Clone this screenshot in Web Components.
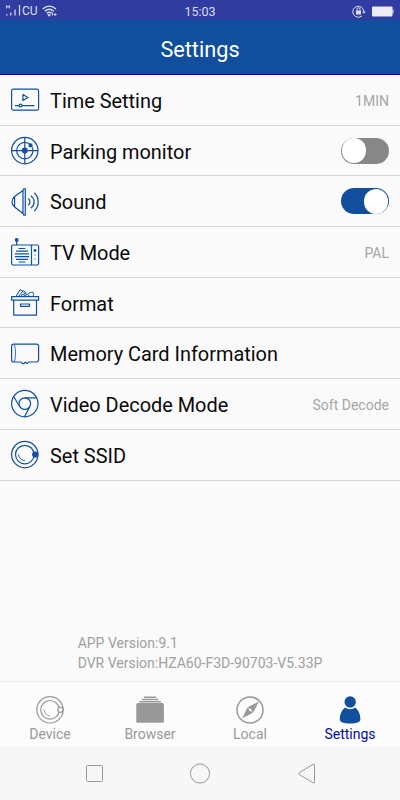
<!DOCTYPE html>
<html lang="en">
<head>
<meta charset="utf-8">
<title>Settings</title>
<style>
html, body {
    margin: 0;
    height: 100%;
}

body {
    font-family: Roboto, "Liberation Sans", sans-serif;
    background: #fafafa;
    overflow: hidden;
}
</style>
</head>
<body>
<settings-app></settings-app>

<script>
const ICONS = {
    time: `<rect x=".6" y="3.2" width="27" height="21" rx="1.8"/><path d="M11.9 8.6v6l5-3zM4 19.600h4.200M10.800 19.600H23.500"/><circle cx="9.500" cy="19.600" r="1.400"/>`,
    parking: `<circle cx="13.800" cy="13.600" r="13.200"/><circle cx="13.800" cy="13.600" r="8.200"/><path d="M13.800.4v26.400M.6 13.600H27"/><circle class="fill" cx="13.800" cy="13.600" r="2.400"/><circle class="fill" cx="19.500" cy="8.300" r="1.500"/>`,
    sound: `<path d="M12 2.500 3.600 8.500C.1 11 .1 16.500 3.600 19L12 25.500M3.600 8.500V19M12 2.500 12.800.8h1.500v26.400h-1.500L12 25.500z"/><path d="M17.200 10.500c2.300 1.800 2.300 5 0 6.800M19.800 7.600c4.400 3.400 4.400 9.200 0 12.600M23.300 4.800c5.200 4.900 5.200 13.300 0 18.200"/>`,
    tv: `<circle class="fill" cx="5.700" cy="1.900" r="1.300"/><path d="M5.700 2v5M3 27v.6M25 27v.6"/><rect x=".6" y="7" width="27" height="20" rx="1.500"/><path d="M20.500 7v20"/><path d="M7.600 10.500h6.800M5 13.200h12M3.900 15.900h14.200M3.900 18.600h14.200M5 21.300h12M7.600 24h6.800"/><circle class="fill" cx="24" cy="12.500" r=".8"/><path d="M23.500 17h1M23.500 21h1"/>`,
    format: `<path d="M.6 7.700h27v3.400H.6zM2.700 11.100h22.800v15H2.700zM9.500 15h9v2.300h-9z"/><path d="M5 7.500 9 .7l3 1.500M7.300 7.500l4.900-5.700 2.500 1.500-1.400 2.200M9.700 7.500l1.600-2.200 5 2.200M12.500 4l4 1.500c1.500-1.600 3.500-2.500 5.500-2.200.7 1 .7 2.700 0 4.200M17 5.700l1.500 1.800" stroke-width="1"/>`,
    card: `<path d="M2.600 4.100H25.400q2.200 0 2.200 2V19.800q0 2-2.200 2.200H18.300q-1 0-1.500 1-.5.800-1.500.2l-1-1-1.300 1.300q-1 .5-1.900-.3-.5-1-1.500-1.200H2.600q-2 0-2-2V6.100q0-2 2-2z"/><path d="M3.400 4.300C5 8.800 4.800 17.500 3.400 22" stroke-width=".8"/>`,
    chrome: `<circle cx="13.800" cy="13.600" r="13.200"/><circle cx="13.800" cy="13.600" r="5.800"/><path d="M13.500 7.800H25.500M2.800 6.800l6.200 10.200M18.800 16.600 13.500 26.700"/>`,
    ssid: `<circle cx="13.800" cy="13.600" r="13.200"/><circle cx="13.800" cy="13.600" r="9.300"/><circle class="fill" cx="24.200" cy="13.600" r="2.500"/><path d="M7.500 13.300c.2 3.300 2.700 6 6.500 6.500" stroke-width=".9"/>`,
    device: `<circle cx="14" cy="13.800" r="13.200"/><circle cx="14" cy="13.800" r="9.300"/><circle class="hole" cx="24.400" cy="13.800" r="2.600"/><path d="M8.200 13.500c.2 3.300 2.400 6 6 6.500" stroke-width=".9"/>`,
    browser: `<rect class="solid" x=".3" y="7" width="27.600" height="19.700" rx="1.500"/><path d="M3.300 5.700h21.600M5.800 3.500h16.600M8 1.300h12.200" stroke-width="1.500"/>`,
    local: `<circle cx="14" cy="14" r="13" stroke-width="1.500"/><path class="solid" d="M22.800 5.600 17.200 16.800 6.200 22.200 11.500 11.200z"/><path d="m11.300 11 6.100 6.100" stroke="#fcfcfc" stroke-width=".8"/><circle cx="14.300" cy="14" r="1.200" fill="#fcfcfc" stroke="none"/>`,
    user: `<circle class="solid" cx="14.200" cy="6" r="5.700"/><path class="solid" d="M9.200 11.400c3 2.300 7 2.300 10 0 3.300 2.300 5.200 6.900 5.200 12.200-.1 2.600-4 4-10.300 4S4 26.200 3.800 23.600c0-5.300 2-9.900 5.400-12.200z"/>`
};

class LineIcon extends HTMLElement {
    constructor() {
        super();
        this.attachShadow({ mode: "open" });
    }

    connectedCallback() {
        this.shadowRoot.innerHTML = `
<style>
:host {
    display: block;
    flex: none;
    width: 28px;
    height: 28px;
}

svg {
    display: block;
    overflow: visible;
    fill: none;
    stroke: currentColor;
    stroke-width: 1.2;
    stroke-linejoin: round;
}

.fill {
    fill: currentColor;
}

.solid {
    fill: currentColor;
    stroke: none;
}

.hole {
    fill: #fcfcfc;
}
</style>
<svg width="28" height="28" viewBox="0 0 28 28">${ICONS[this.getAttribute("name")]}</svg>
`;
    }
}

class StatusBar extends HTMLElement {
    constructor() {
        super();
        this.attachShadow({ mode: "open" }).innerHTML = `
<style>
:host {
    display: grid;
    grid-template-columns: 1fr auto 1fr;
    align-items: center;
    height: 20px;
    padding: 0 6px;
    background: #303c9f;
    color: #dcdff2;
    font-size: 12.5px;
    line-height: 21px;
}

div {
    display: flex;
    align-items: center;
}

.right {
    justify-content: flex-end;
    gap: 6px;
}

.wifi {
    margin-left: 4px;
}

.carrier {
    margin-left: 1px;
    padding-top: 1px;
    font-size: 12px;
}

svg {
    display: block;
    fill: none;
    stroke: currentColor;
}
</style>
<div>
    <svg width="15" height="12" viewBox="0 0 15 12"><path d="M.7 0v3.500M3.300 0v3.500M.7 1.800h2.600" stroke-width=".9"/><path d="M.8 9v1.500M4.800 7.500v3M9 4.500v6M13.500 0v10.500" stroke-width="1.200"/></svg>
    <span class="carrier">CU</span>
    <svg class="wifi" width="16" height="12" viewBox="0 0 16 12"><path d="M.7 4c4-3.800 9.200-3.800 13.200 0M2.800 6.200c2.900-2.500 6.100-2.500 9 0M4.800 8.300c1.700-1.400 3.300-1.400 5 0" stroke-width="1.300"/><path d="m5.800 9.500 1.500 1.800 1.200-1.500zM10.500 7.500v3M13 8v3M11.700 9.500h3" fill="currentColor" stroke-width=".9"/></svg>
</div>
<span>15:03</span>
<div class="right">
    <svg width="14" height="13" viewBox="0 0 14 13"><path d="M10 10.800A5.500 5.500 0 1 1 11.800 6.500" /><path d="M10 6.500h3.800l-1.900 2.300z" fill="currentColor" stroke="none"/><rect x="4" y="5.500" width="5" height="4" fill="currentColor" stroke="none"/><path d="M5 5.500V4.200a1.500 1.500 0 0 1 3 0v1.300"/></svg>
    <svg width="22" height="11" viewBox="0 0 22 11"><rect x="0" y=".5" width="20.500" height="10" rx="1" fill="#ebecf8" stroke="none"/><path d="M21 3.500v4" stroke="#ebecf8"/></svg>
</div>
`;
    }
}

class TitleBar extends HTMLElement {
    constructor() {
        super();
        this.attachShadow({ mode: "open" }).innerHTML = `
<style>
:host {
    display: flex;
    align-items: center;
    justify-content: center;
    box-sizing: border-box;
    height: 55px;
    padding-top: 4px;
    border-bottom: 1px solid #00008f;
    background: #114f9e;
    color: #fff;
    font-size: 21.7px;
}
</style>
<slot></slot>
`;
    }
}

class ToggleSwitch extends HTMLElement {
    constructor() {
        super();
        this.attachShadow({ mode: "open" }).innerHTML = `
<style>
:host {
    display: flex;
    box-sizing: border-box;
    width: 48px;
    height: 26px;
    padding: .7px;
    border-radius: 13px;
    background: #878787;
}

:host([on]) {
    justify-content: flex-end;
    background: #114f9e;
}

span {
    width: 24.6px;
    height: 24.6px;
    border-radius: 50%;
    background: #fff;
}
</style>
<span></span>
`;
    }
}

class SettingRow extends HTMLElement {
    constructor() {
        super();
        this.attachShadow({ mode: "open" });
    }

    connectedCallback() {
        this.shadowRoot.innerHTML = `
<style>
:host {
    display: flex;
    align-items: center;
    box-sizing: border-box;
    height: 50.7px;
    padding: 0 11px;
    border-bottom: 1px solid #d6d6d6;
    color: #0a0a0a;
    font-size: 19.92px;
}

line-icon {
    margin-right: 11px;
    padding-top: 1px;
    color: #114fa5;
}

.label {
    flex: 1;
    padding-top: 3.4px;
    white-space: nowrap;
}

.value {
    padding-top: 2px;
    color: #a6a6a6;
    font-size: 14px;
}

::slotted(toggle-switch) {
    margin-top: -2px;
}
</style>
<line-icon name="${this.getAttribute("icon")}"></line-icon>
<span class="label">${this.getAttribute("label")}</span>
<span class="value"><slot></slot></span>
`;
    }
}

class NavTab extends HTMLElement {
    constructor() {
        super();
        this.attachShadow({ mode: "open" });
    }

    connectedCallback() {
        this.shadowRoot.innerHTML = `
<style>
:host {
    display: flex;
    flex: 1;
    flex-direction: column;
    align-items: center;
    padding-top: 14px;
    color: #999;
    font-size: 14px;
    line-height: 18px;
}

:host([active]) {
    color: #000f9c;
}

:host([active]) line-icon {
    color: #114f9e;
}

span {
    margin-top: 1px;
}
</style>
<line-icon name="${this.getAttribute("icon")}"></line-icon>
<span><slot></slot></span>
`;
    }
}

class SystemKeys extends HTMLElement {
    constructor() {
        super();
        this.attachShadow({ mode: "open" }).innerHTML = `
<style>
:host {
    display: flex;
    align-items: center;
    justify-content: center;
    gap: 85px;
    height: 53px;
    background: #f7f7f7;
}

svg {
    display: block;
    fill: none;
    stroke: #999;
}
</style>
<svg width="22" height="22" viewBox="0 0 22 22"><rect x="4.500" y="2.500" width="16" height="16" rx="1"/></svg>
<svg width="22" height="22" viewBox="0 0 22 22"><circle cx="11" cy="10.500" r="9.600"/></svg>
<svg width="22" height="22" viewBox="0 0 22 22"><path d="M17 1.400Q18.500.8 18.500 2.500v16.300q0 1.700-1.500 1L3.200 11.500q-1-.9 0-1.800z"/></svg>
`;
    }
}

class SettingsApp extends HTMLElement {
    constructor() {
        super();
        this.attachShadow({ mode: "open" }).innerHTML = `
<style>
:host {
    display: flex;
    flex-direction: column;
    height: 100vh;
    background: #fafafa;
}

main {
    display: flex;
    flex: 1;
    flex-direction: column;
}

.versions {
    margin: auto auto 8px;
    color: #a0a0a0;
    font-size: 14px;
    line-height: 19.500px;
}

nav {
    display: flex;
    box-sizing: border-box;
    height: 66px;
    border-top: 1px solid #f0f0f0;
    background: #fcfcfc;
}
</style>
<status-bar></status-bar>
<title-bar>Settings</title-bar>
<main>
    <setting-row icon="time" label="Time Setting">1MIN</setting-row>
    <setting-row icon="parking" label="Parking monitor"><toggle-switch></toggle-switch></setting-row>
    <setting-row icon="sound" label="Sound"><toggle-switch on></toggle-switch></setting-row>
    <setting-row icon="tv" label="TV Mode">PAL</setting-row>
    <setting-row icon="format" label="Format"></setting-row>
    <setting-row icon="card" label="Memory Card Information"></setting-row>
    <setting-row icon="chrome" label="Video Decode Mode">Soft Decode</setting-row>
    <setting-row icon="ssid" label="Set SSID"></setting-row>
    <div class="versions">
        <div>APP Version:9.1</div>
        <div>DVR Version:HZA60-F3D-90703-V5.33P</div>
    </div>
</main>
<nav>
    <nav-tab icon="device">Device</nav-tab>
    <nav-tab icon="browser">Browser</nav-tab>
    <nav-tab icon="local">Local</nav-tab>
    <nav-tab icon="user" active>Settings</nav-tab>
</nav>
<system-keys></system-keys>
`;
    }
}

window.customElements.define("line-icon", LineIcon);
window.customElements.define("status-bar", StatusBar);
window.customElements.define("title-bar", TitleBar);
window.customElements.define("toggle-switch", ToggleSwitch);
window.customElements.define("setting-row", SettingRow);
window.customElements.define("nav-tab", NavTab);
window.customElements.define("system-keys", SystemKeys);
window.customElements.define("settings-app", SettingsApp);
</script>
</body>
</html>
